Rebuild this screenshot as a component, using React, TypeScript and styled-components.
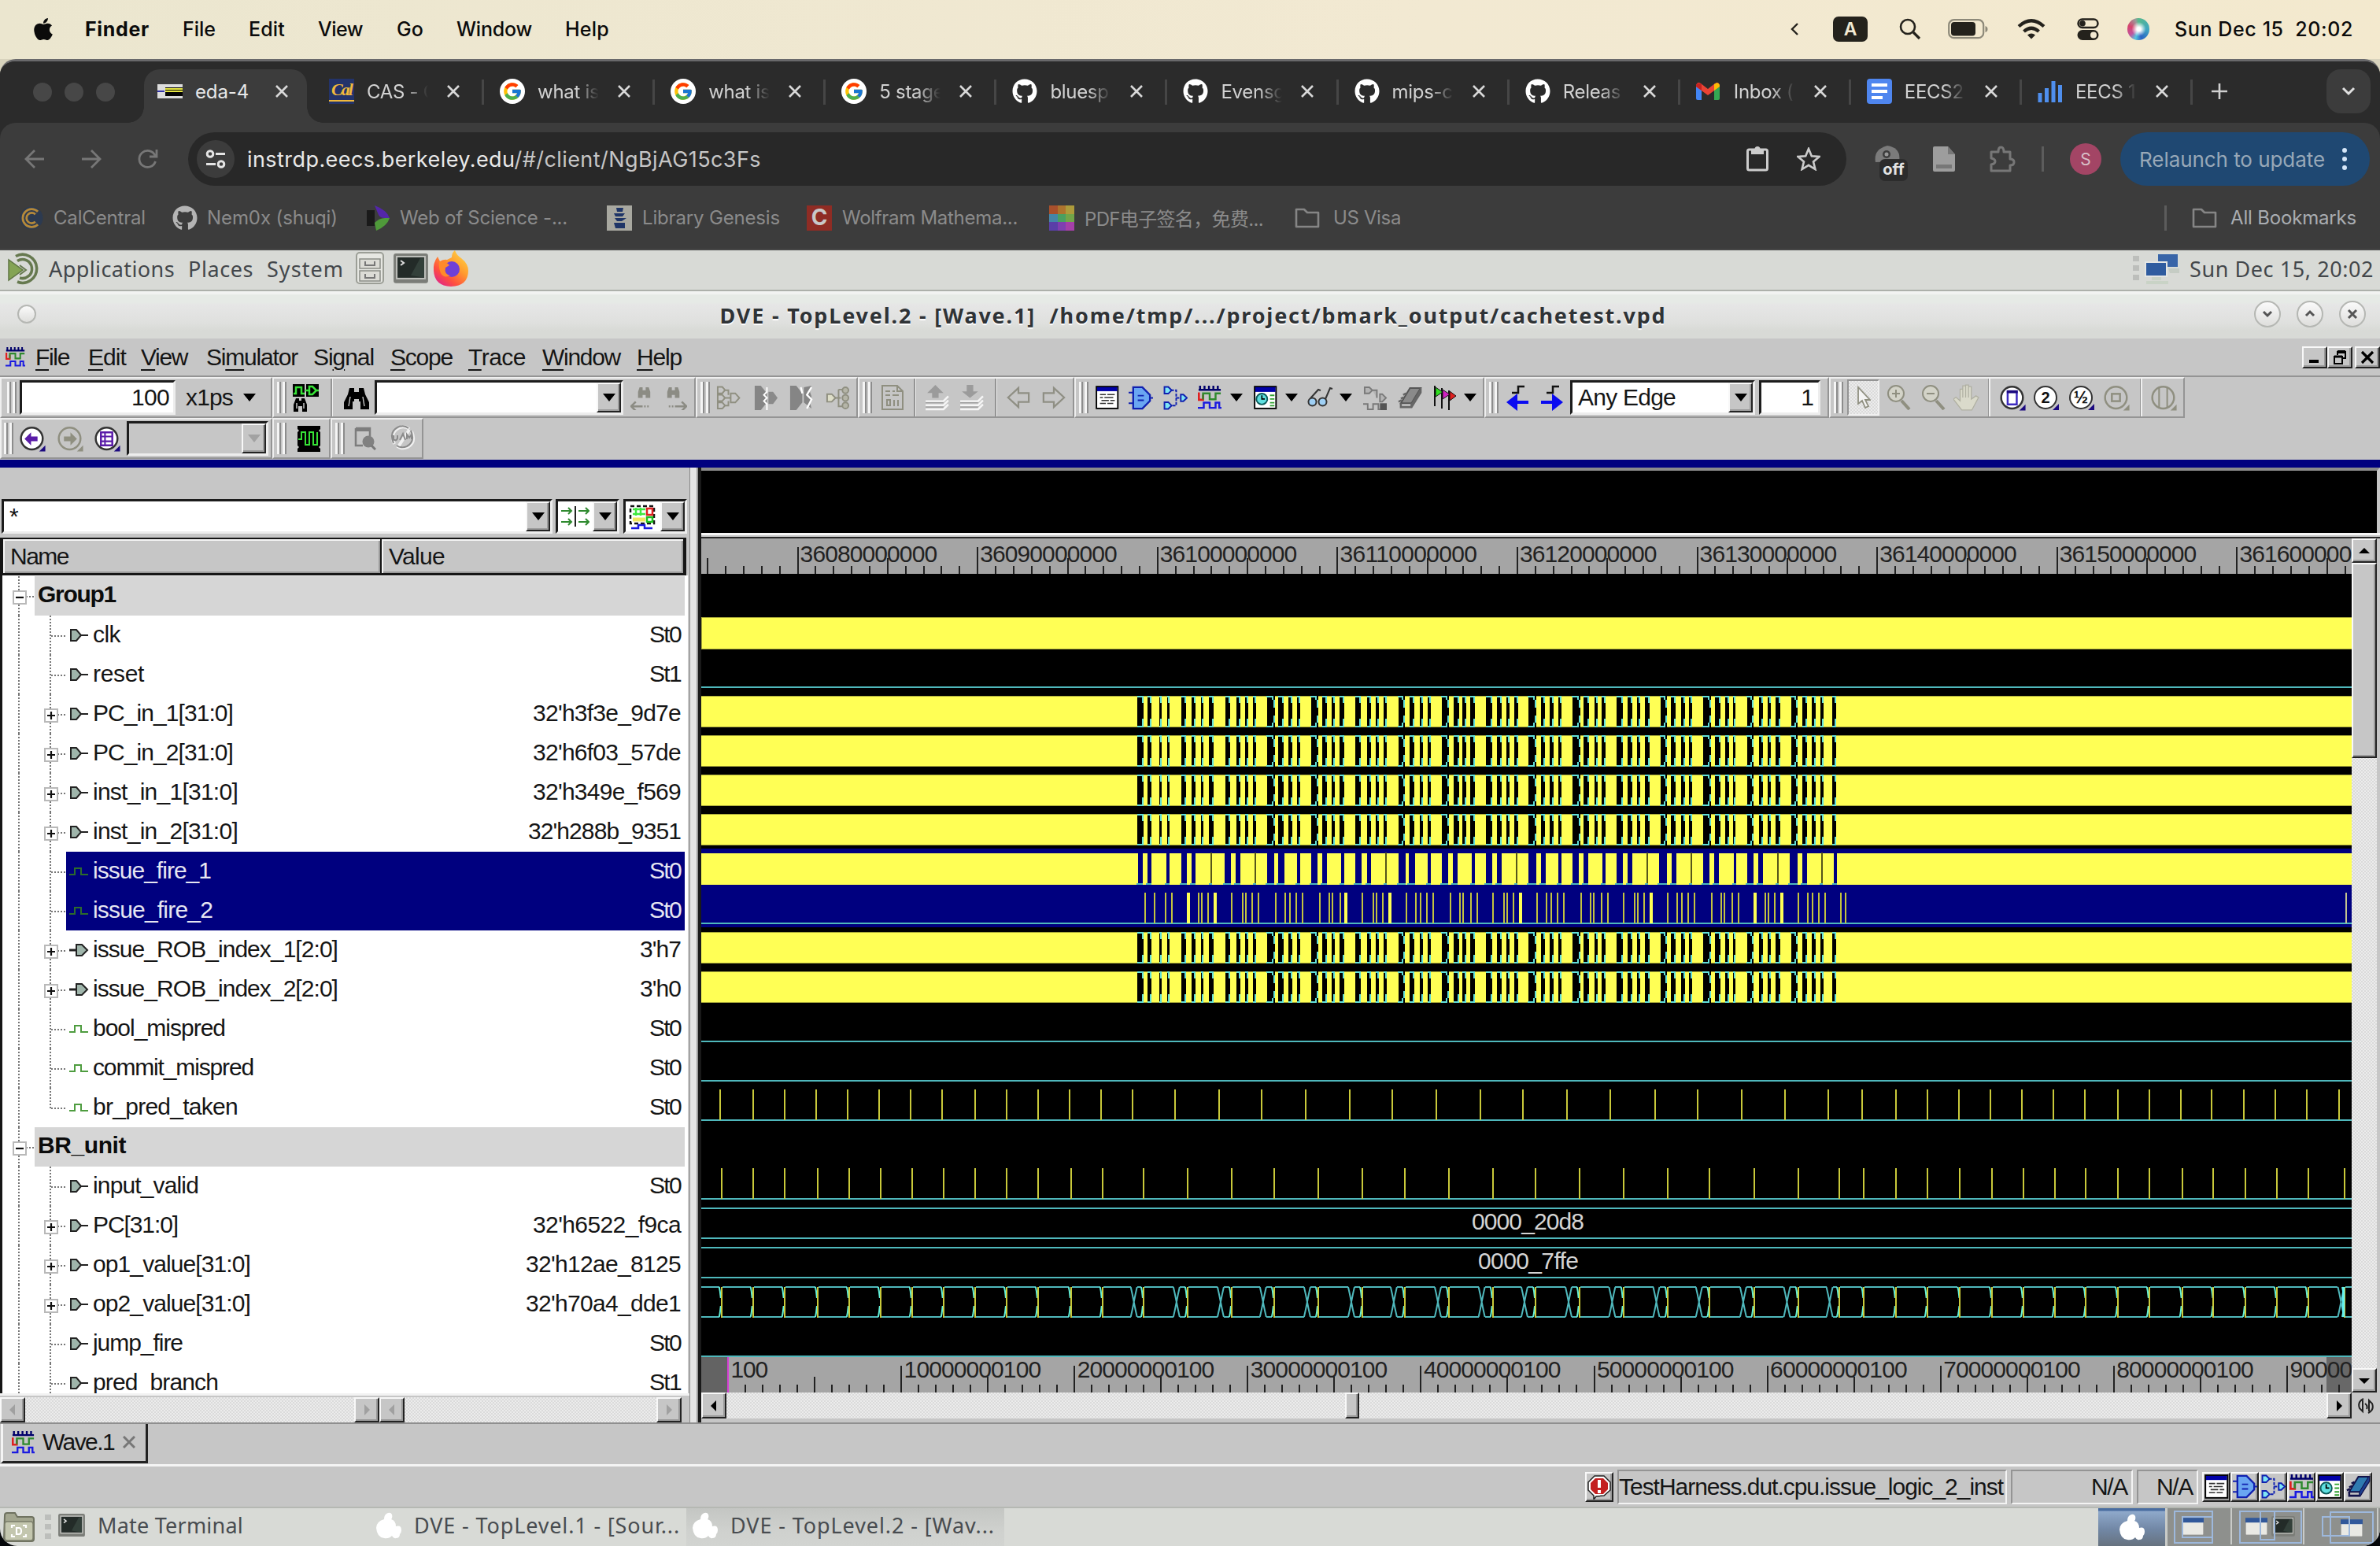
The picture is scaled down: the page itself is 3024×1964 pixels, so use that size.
import React, { useLayoutEffect, useRef } from "react";
import styled, { createGlobalStyle, css } from "styled-components";
import { FaApple, FaGithub } from "react-icons/fa";
import { FcGoogle } from "react-icons/fc";

const QT = `"Liberation Sans", Arial, sans-serif`;
const UI = `Inter, "Noto Sans CJK SC", sans-serif`;
const MATE = `"Noto Sans", sans-serif`;

const Global = createGlobalStyle`
  * { box-sizing: border-box; }
  html, body { margin: 0; padding: 0; background: #000; overflow: hidden; }
  svg { display: block; flex: none; }
`;

const raised = css`
  background: #c6c6c6;
  border: 2px solid;
  border-color: #f8f8f8 #222 #222 #f8f8f8;
  box-shadow: inset -2px -2px 0 #9a9a9a;
`;
const sunken = css`
  border: 3px solid;
  border-color: #1c1c1c #ededed #ededed #1c1c1c;
`;
const dither = css`
  background-color: #e6e6e6;
  background-image: conic-gradient(#dadada 25%, #ececec 0 50%, #dadada 0 75%, #ececec 0);
  background-size: 4px 4px;
`;

/* ---------- text that spreads its letters over a given width ---------- */
const FitSpan = styled.span`
  display: inline-block;
  white-space: pre;
  flex: none;
`;
function Fit({ w, children }: { w: number; children: React.ReactNode }) {
  const ref = useRef<HTMLSpanElement>(null);
  useLayoutEffect(() => {
    const el = ref.current;
    if (!el) return;
    el.style.letterSpacing = "0px";
    const natural = el.getBoundingClientRect().width;
    const n = (el.textContent || "x").length;
    el.style.letterSpacing = `${(w - natural) / n}px`;
  }, [w, children]);
  return <FitSpan ref={ref}>{children}</FitSpan>;
}

const Slot = styled.div<{ $w: number; $pl?: number }>`
  flex: none;
  display: flex;
  align-items: center;
  width: ${(p) => p.$w}px;
  padding-left: ${(p) => p.$pl || 0}px;
  height: 100%;
`;
const Spacer = styled.div`
  flex: 1;
`;

/* ================= desktop menu bar ================= */
const Screen = styled.div`
  width: 3024px;
  height: 1964px;
  display: flex;
  flex-direction: column;
  overflow: hidden;
  background: #eee7cf;
`;
const MenuBar = styled.div`
  height: 75px;
  flex: none;
  display: flex;
  align-items: center;
  padding: 0 0 2px 39px;
  background: linear-gradient(90deg, #ebe6cf, #f2e9d2 60%, #f3e9ce);
  font: 500 25px ${UI};
  color: #0b0b0b;
`;
const Bold = styled.span`
  font-weight: 700;
`;
const InputBadge = styled.div`
  width: 44px;
  height: 32px;
  border-radius: 7px;
  background: #24221c;
  color: #f2e9d2;
  display: flex;
  align-items: center;
  justify-content: center;
  font: 600 23px ${UI};
`;
const Siri = styled.div`
  width: 28px;
  height: 28px;
  border-radius: 50%;
  background: radial-gradient(circle at 52% 50%, #fff 0 12%, transparent 45%),
    conic-gradient(#57b98c, #3fa7c0 25%, #2b63c4 45%, #53c5df 55%, #c0559e 65%, #d8436c 80%, #9a9a9a 95%, #57b98c);
`;

function MacMenu() {
  return (
    <MenuBar>
      <Slot $w={69}>
        <FaApple size={32} />
      </Slot>
      <Slot $w={124}><Bold><Fit w={82}>Finder</Fit></Bold></Slot>
      <Slot $w={84}><Fit w={42}>File</Fit></Slot>
      <Slot $w={88}><Fit w={46}>Edit</Fit></Slot>
      <Slot $w={100}><Fit w={57}>View</Fit></Slot>
      <Slot $w={76}><Fit w={34}>Go</Fit></Slot>
      <Slot $w={138}><Fit w={96}>Window</Fit></Slot>
      <Slot $w={80}><Fit w={56}>Help</Fit></Slot>
      <Spacer />
      <Slot $w={55}>
        <svg width="12" height="18" viewBox="0 0 12 18"><path d="M10 2 3 9l7 7" fill="none" stroke="#24221c" strokeWidth="2.4" /></svg>
      </Slot>
      <Slot $w={84}><InputBadge>A</InputBadge></Slot>
      <Slot $w={62}>
        <svg width="28" height="28" viewBox="0 0 28 28" fill="none" stroke="#24221c" strokeWidth="2.6"><circle cx="11" cy="11" r="9" /><path d="m18 18 8 8" strokeWidth="3.2" /></svg>
      </Slot>
      <Slot $w={88}>
        <svg width="52" height="26" viewBox="0 0 52 26"><rect x="1.2" y="1.2" width="44" height="23" rx="6.5" fill="none" stroke="#8d8979" strokeWidth="2.2" /><rect x="4" y="4" width="31" height="17.5" rx="4" fill="#24221c" /><path d="M47.5 9v8q3-1 3-4t-3-4z" fill="#8d8979" /></svg>
      </Slot>
      <Slot $w={76}>
        <svg width="36" height="26" viewBox="0 0 36 26" fill="none" stroke="#24221c" strokeWidth="4.2"><path d="M2 9.5Q18-5 34 9.5" /><path d="M8.500 16Q18 7.500 27.500 16" /><path d="m13 20.500q5-4 10 0l-5 5z" fill="#24221c" stroke="none" /></svg>
      </Slot>
      <Slot $w={64}>
        <svg width="28" height="28" viewBox="0 0 28 28"><rect x="1.500" y="1.500" width="25" height="10.500" rx="5.200" fill="none" stroke="#24221c" strokeWidth="2.500" /><circle cx="7" cy="6.700" r="3.800" fill="#24221c" /><rect x="0.500" y="15" width="27" height="13" rx="6.500" fill="#24221c" /><circle cx="21" cy="21.500" r="4" fill="#f2e9d2" /></svg>
      </Slot>
      <Slot $w={60}><Siri /></Slot>
      <Slot $w={261}><Fit w={227}>Sun Dec 15  20:02</Fit></Slot>
    </MenuBar>
  );
}

/* ================= browser chrome ================= */
const Browser = styled.div`
  flex: 1;
  min-width: 0;
  display: flex;
  flex-direction: column;
  background: #2b2b2b;
  border-radius: 20px 20px 22px 22px;
  overflow: hidden;
  border-top: 3px solid #69696b;
`;
const Desk = styled.div`
  flex: 1;
  display: flex;
  background: linear-gradient(#d8d3bd 0 100px, #05070a 100px);
`;
const TabStrip = styled.div`
  height: 78px;
  flex: none;
  display: flex;
  align-items: flex-end;
  padding-left: 42px;
  background: #2b2b2b;
  font: 400 24px ${UI};
  color: #d2d2d2;
`;
const Lights = styled.div`
  display: flex;
  gap: 16px;
  width: 141px;
  height: 78px;
  align-items: center;
  flex: none;
`;
const Light = styled.div`
  width: 24px;
  height: 24px;
  border-radius: 50%;
  background: #474747;
`;
const ActiveTab = styled.div`
  width: 207px;
  height: 68px;
  flex: none;
  display: flex;
  align-items: center;
  padding: 0 0 12px 17px;
  border-radius: 20px 20px 0 0;
  background: #3c3c3c;
  color: #e8e8e8;
  position: relative;
  &::before, &::after {
    content: "";
    position: absolute;
    bottom: 0;
    width: 20px;
    height: 20px;
  }
  &::before { left: -20px; background: radial-gradient(circle at 0 0, transparent 19.5px, #3c3c3c 20px); }
  &::after { right: -20px; background: radial-gradient(circle at 100% 0, transparent 19.5px, #3c3c3c 20px); }
`;
const TabBox = styled.div<{ $sep: boolean; $w?: number }>`
  width: ${(p) => p.$w || 217.1}px;
  height: 68px;
  padding: 0 0 12px 22px;
  flex: none;
  display: flex;
  align-items: center;
  position: relative;
  &::before {
    content: "";
    display: ${(p) => (p.$sep ? "block" : "none")};
    position: absolute;
    left: -1px;
    top: 13px;
    width: 3px;
    height: 32px;
    background: #464646;
  }
`;
const Fav = styled.div`
  width: 48px;
  flex: none;
`;
const TabTitle = styled.div`
  width: 78px;
  overflow: hidden;
  white-space: pre;
  letter-spacing: -0.3px;
  flex: none;
  mask-image: linear-gradient(90deg, #000 62%, transparent 100%);
`;
const RoundBtn = styled.div`
  width: 56px;
  height: 56px;
  border-radius: 18px;
  background: #3c3c3c;
  display: flex;
  align-items: center;
  justify-content: center;
`;
const TabMenu = styled.div`
  width: 68px;
  height: 68px;
  flex: none;
`;
const Cross = () => (
  <svg width="16" height="16" viewBox="0 0 16 16"><path d="m1 1 14 14M15 1 1 15" stroke="#d8d8d8" strokeWidth="2.600" /></svg>
);
const White = styled.div`
  width: 32px;
  height: 32px;
  border-radius: 50%;
  background: #fff;
  display: flex;
  align-items: center;
  justify-content: center;
`;
const GIcon = () => <White><FcGoogle size={26} /></White>;
const Hub = () => <FaGithub size={32} color="#fff" />;
const CalText = styled.div`
  width: 32px;
  height: 32px;
  background: #23336a;
  color: #f0b93c;
  font: italic 700 22px/27px "Liberation Serif", serif;
  letter-spacing: -2px;
  text-align: center;
  box-shadow: inset 0 -3px 0 #23336a, inset 0 -5px 0 #f0b93c;
`;
const Gmail = () => (
  <svg width="30" height="22" viewBox="0 0 30 22"><path d="M0 3v17q0 2 2 2h5V9z" fill="#4285f4" /><path d="M30 3v17q0 2-2 2h-5V9z" fill="#34a853" /><path d="M0 3q2-5 6-2l9 7 9-7q4-3 6 2v2l-15 11L0 5z" fill="#ea4335" /><path d="M23 2q5-4 7 1v2l-7 5z" fill="#fbbc04" /><path d="M0 3q2-4 7-1v8L0 5z" fill="#c5221f" /></svg>
);
const Docs = () => (
  <svg width="32" height="32" viewBox="0 0 32 32"><rect width="32" height="32" rx="4" fill="#4f86ef" /><path d="M6 8h20M6 16h20M6 24h14" stroke="#fff" strokeWidth="4" /></svg>
);
const Bars = () => (
  <svg width="32" height="32" viewBox="0 0 32 32"><path d="M3 30V18M11.500 30V12M20 30V3M28.500 30V8" stroke="#4f8fee" strokeWidth="5" /></svg>
);
const EdaFav = () => (
  <svg width="32" height="18" viewBox="0 0 32 18"><rect width="32" height="18" fill="#ddd" /><rect x="10" y="4" width="22" height="11" fill="#050505" /><path d="M10 6h22M10 9h22" stroke="#e8e840" strokeWidth="2" /><path d="M0 9h9" stroke="#33a" strokeWidth="2" /></svg>
);

const TABS: [React.ReactNode, string][] = [
  [<CalText>Cal</CalText>, "CAS - C"],
  [<GIcon />, "what is"],
  [<GIcon />, "what is"],
  [<GIcon />, "5 stage"],
  [<Hub />, "bluesp"],
  [<Hub />, "Evensg"],
  [<Hub />, "mips-c"],
  [<Hub />, "Releas"],
  [<Gmail />, "Inbox ("],
  [<Docs />, "EECS2"],
  [<Bars />, "EECS 1"],
];

const ToolRow = styled.div`
  height: 80px;
  flex: none;
  display: flex;
  align-items: center;
  padding: 12px 0 0 1px;
  background: #3c3c3c;
  border-radius: 20px 20px 0 0;
  font: 400 27px ${UI};
`;
const Omni = styled.div`
  width: 2107px;
  height: 68px;
  border-radius: 34px;
  background: #282828;
  flex: none;
  display: flex;
  align-items: center;
  padding-left: 11px;
  color: #c6c6c6;
`;
const SiteBtn = styled.div`
  width: 48px;
  height: 48px;
  border-radius: 50%;
  background: #3c3c3c;
  display: flex;
  align-items: center;
  justify-content: center;
  margin-right: 16px;
  flex: none;
`;
const Host = styled.span`
  color: #e9e9e9;
`;
const VBar = styled.div<{ $c?: string }>`
  width: 3px;
  height: 32px;
  background: ${(p) => p.$c || "#5c5c5c"};
`;
const Avatar = styled.div`
  width: 40px;
  height: 40px;
  border-radius: 50%;
  background: #a34565;
  color: #d9c0c8;
  font-size: 21px;
  display: flex;
  align-items: center;
  justify-content: center;
`;
const Relaunch = styled.div`
  width: 317px;
  height: 68px;
  border-radius: 34px;
  background: #1f4872;
  color: #98a8b8;
  display: flex;
  align-items: center;
  padding-left: 24px;
  font-size: 26px;
`;
const OffWrap = styled.div`
  position: relative;
  width: 46px;
  height: 40px;
`;
const OffBadge = styled.div`
  position: absolute;
  left: 7px;
  top: 20px;
  width: 36px;
  height: 28px;
  border-radius: 7px;
  background: #2c2c2c;
  color: #e4e4e4;
  font: 700 20px/27px ${UI};
  text-align: center;
`;
const Marks = styled.div`
  height: 82px;
  flex: none;
  display: flex;
  align-items: center;
  background: #3c3c3c;
  padding: 1px 0 0 25px;
  font: 400 24px ${UI};
  color: #8b8b8b;
  border-bottom: 2px solid #464646;
`;
const AllMarks = styled.span`
  color: #a9adb2;
`;
const Folder = () => (
  <svg width="32" height="26" viewBox="0 0 32 26"><path d="M2 2h10l4 4h14v18H2z" fill="none" stroke="#858585" strokeWidth="2.600" strokeLinejoin="round" /></svg>
);
const Square = styled.div<{ $bg: string; $c: string }>`
  width: 32px;
  height: 32px;
  background: ${(p) => p.$bg};
  color: ${(p) => p.$c};
  font: 700 28px/31px ${UI};
  text-align: center;
`;
const CalC = () => (
  <svg width="30" height="32" viewBox="0 0 30 32" fill="none"><circle cx="15" cy="16" r="14.500" fill="#2c3a50" /><path d="M21.500 9.500a9 9 0 1 0 0 13" stroke="#b5893a" strokeWidth="7.500" /><path d="M21.500 9.500a9 9 0 1 0 0 13" stroke="#2c3a50" strokeWidth="2" /></svg>
);
const PDF_COLORS = ["#a8502c", "#ad742e", "#ad9b3b", "#4585a8", "#4a9f60", "#72a548", "#5a3fa8", "#7f3fb0", "#a53fa8"];

function Chrome() {
  return (
    <>
      <TabStrip>
        <Lights><Light /><Light /><Light /></Lights>
        <ActiveTab>
          <Fav><EdaFav /></Fav>
          <Slot $w={102}><Fit w={68}>eda-4</Fit></Slot>
          <Cross />
        </ActiveTab>
        <Slot $w={6} />
        {TABS.map(([icon, t], i) => (
          <TabBox key={i} $sep={i > 0}>
            <Fav>{icon}</Fav>
            <TabTitle>{t}</TabTitle>
            <Slot $w={24} />
            <Cross />
          </TabBox>
        ))}
        <TabBox $sep $w={100}>
          <Slot $w={30} $pl={3}>
            <svg width="22" height="22" viewBox="0 0 22 22"><path d="M11 1v20M1 11h20" stroke="#d0d0d0" strokeWidth="2.600" /></svg>
          </Slot>
        </TabBox>
        <Spacer />
        <TabMenu>
          <RoundBtn>
            <svg width="18" height="12" viewBox="0 0 18 12"><path d="m2 2 7 7 7-7" fill="none" stroke="#e0e0e0" strokeWidth="3" /></svg>
          </RoundBtn>
        </TabMenu>
      </TabStrip>
      <ToolRow>
        <Slot $w={71} $pl={30}><svg width="26" height="24" viewBox="0 0 26 24"><path d="M13 1 2 12l11 11M2 12h23" fill="none" stroke="#777" strokeWidth="2.800" /></svg></Slot>
        <Slot $w={73} $pl={31}><svg width="26" height="24" viewBox="0 0 26 24"><path d="m13 1 11 11-11 11M24 12H1" fill="none" stroke="#777" strokeWidth="2.800" /></svg></Slot>
        <Slot $w={94} $pl={30}><svg width="26" height="26" viewBox="0 0 26 26"><path d="M22.500 16A10.500 10.500 0 1 1 22 8.500M24 1v9h-9" fill="none" stroke="#777" strokeWidth="2.800" /></svg></Slot>
        <Omni>
          <SiteBtn>
            <svg width="26" height="24" viewBox="0 0 26 24" fill="none" stroke="#e4e4e4" strokeWidth="3"><circle cx="6" cy="5.500" r="3.800" /><path d="M13 5.500h12M1 18.500h12" /><circle cx="20" cy="18.500" r="3.800" /></svg>
          </SiteBtn>
          <Fit w={653}><Host>instrdp.eecs.berkeley.edu</Host>/#/client/NgBjAG15c3Fs</Fit>
          <Spacer />
          <Slot $w={64}><svg width="28" height="32" viewBox="0 0 28 32"><rect x="1.500" y="4" width="25" height="26" rx="2" fill="none" stroke="#ccc" strokeWidth="3" /><rect x="6" y="3" width="16" height="7" fill="#ccc" /><circle cx="14" cy="3.500" r="3.500" fill="#ccc" /></svg></Slot>
          <Slot $w={63}><svg width="30" height="30" viewBox="0 0 30 30"><path d="m15 2 3.800 9.200 9.700.8-7.500 6.400 2.400 9.600L15 22.800 6.600 28 9 18.400 1.500 12l9.700-.8z" fill="none" stroke="#ccc" strokeWidth="2.600" /></svg></Slot>
        </Omni>
        <Slot $w={110} $pl={35}>
          <OffWrap>
            <svg width="36" height="38" viewBox="0 0 36 38"><path d="M2 24Q-1 8 17 3q18 3 15 20z" fill="#7b7b7b" /><circle cx="16" cy="14" r="5" fill="#3c3c3c" /><circle cx="16" cy="14" r="2.500" fill="#999" /></svg>
            <OffBadge>off</OffBadge>
          </OffWrap>
        </Slot>
        <Slot $w={71}><svg width="28" height="32" viewBox="0 0 28 32"><path d="M0 2q0-2 2-2h17l9 10v20q0 2-2 2H2q-2 0-2-2z" fill="#9d9d9d" /><path d="M19 0v10h9z" fill="#777" /><path d="M4 23h20v5H4z" fill="#777" /></svg></Slot>
        <Slot $w={67}><svg width="34" height="34" viewBox="0 0 34 34"><path d="M3 8h9q0-6 3.500-6T19 8h8v9q5 0 5 4t-5 4v7H3v-8q5-1 5-4t-5-4z" fill="none" stroke="#777" strokeWidth="3" strokeLinejoin="round" /></svg></Slot>
        <Slot $w={36}><VBar /></Slot>
        <Slot $w={64}><Avatar>S</Avatar></Slot>
        <Relaunch>
          <Slot $w={258}><Fit w={236}>Relaunch to update</Fit></Slot>
          <svg width="6" height="30" viewBox="0 0 6 30" fill="#d5e6f8"><circle cx="3" cy="4" r="3" /><circle cx="3" cy="15" r="3" /><circle cx="3" cy="26" r="3" /></svg>
        </Relaunch>
      </ToolRow>
      <Marks>
        <Slot $w={43}><CalC /></Slot>
        <Slot $w={151}><Fit w={117}>CalCentral</Fit></Slot>
        <Slot $w={44}><FaGithub size={32} color="#b4b4b4" /></Slot>
        <Slot $w={203}><Fit w={166}>Nem0x (shuqi)</Fit></Slot>
        <Slot $w={42}><svg width="30" height="32" viewBox="0 0 30 32"><path d="M0 6h10v20L0 26z" fill="#1a1a1a" /><path d="M10 0q16 6 19 16l-6 0q-6 0-8-4z" fill="#5326a8" /><path d="M29 16Q26 26 12 32l-2-10q6-6 13-6z" fill="#4f9a3a" /></svg></Slot>
        <Slot $w={263}><Fit w={213}>Web of Science -...</Fit></Slot>
        <Slot $w={45}><svg width="32" height="32" viewBox="0 0 32 32"><rect width="32" height="32" fill="#a8a8a0" /><path d="M12 3h9l-1 5h-7zM9 10h14l-3 4h-9zM10 16h15l-6 4h-6zM9 22h14v7H11z" fill="#1f3567" /></svg></Slot>
        <Slot $w={209}><Fit w={175}>Library Genesis</Fit></Slot>
        <Slot $w={45}><Square $bg="#8f2c24" $c="#c8c8c8">C</Square></Slot>
        <Slot $w={263}><Fit w={223}>Wolfram Mathema...</Fit></Slot>
        <Slot $w={45}>
          <svg width="32" height="32" viewBox="0 0 3 3" shapeRendering="crispEdges">
            {PDF_COLORS.map((c, i) => <rect key={i} x={i % 3} y={Math.floor(i / 3)} width="1" height="1" fill={c} />)}
          </svg>
        </Slot>
        <Slot $w={267}><Fit w={227}>PDF电子签名，免费...</Fit></Slot>
        <Slot $w={49}><Folder /></Slot>
        <Slot $w={120}><Fit w={86}>US Visa</Fit></Slot>
        <Spacer />
        <Slot $w={35}><VBar /></Slot>
        <Slot $w={49}><Folder /></Slot>
        <Slot $w={190}><AllMarks><Fit w={160}>All Bookmarks</Fit></AllMarks></Slot>
      </Marks>
    </>
  );
}

/* ================= MATE desktop panels ================= */
const TopPanel = styled.div`
  height: 52px;
  flex: none;
  display: flex;
  align-items: center;
  padding: 0 0 4px 9px;
  background: #d8dad6;
  border-bottom: 2px solid #adb0ab;
  font: 400 27px ${MATE};
  color: #43474b;
`;
const TitleBar = styled.div`
  height: 60px;
  flex: none;
  display: flex;
  align-items: center;
  padding: 0 18px 2px 22px;
  background: linear-gradient(#f2f3f2 0 3px, #e6eae6 5px 14px, #e6e6e6 17px, #dfe0de 40px, #d8dad6 50px);
  font: 700 27px ${MATE};
  color: #2f3336;
`;
const TitleText = styled.div`
  flex: 1;
  display: flex;
  justify-content: center;
  text-shadow: 0 2px 1px #fff;
  padding: 2px 0 0 122px;
`;
const Knob = styled.div<{ $d: number }>`
  width: ${(p) => p.$d}px;
  height: ${(p) => p.$d}px;
  border-radius: 50%;
  border: 2px solid #b5b7b3;
  background: linear-gradient(#fafafa, #dededc);
  display: flex;
  align-items: center;
  justify-content: center;
  flex: none;
`;
const Knobs = styled.div`
  display: flex;
  gap: 20px;
`;
const Dots = styled.div`
  width: 8px;
  height: 32px;
  flex: none;
  background: repeating-linear-gradient(#bcbebb 0 7px, transparent 7px 12px);
`;

const MateLogo = () => (
  <svg width="42" height="42" viewBox="0 0 42 42" fill="none"><path d="M11 5.500A18 18 0 1 1 13 38" stroke="#66794f" strokeWidth="3.500" /><path d="M13 11.500A12 12 0 1 1 16 33" stroke="#66794f" strokeWidth="3.500" /><path d="M2 10v26l18-13z" fill="#84a455" stroke="#5f7544" strokeWidth="1.500" /><path d="M16 17l8 6-8 6" stroke="#66794f" strokeWidth="2" /></svg>
);
const Drawer = () => (
  <svg width="36" height="42" viewBox="0 0 36 42"><rect x="1" y="1" width="34" height="39" rx="4" fill="#e6e7e2" stroke="#9b9e96" strokeWidth="2" /><rect x="5" y="9" width="26" height="12" fill="#dcdcd6" stroke="#8a8d86" strokeWidth="1.500" /><rect x="5" y="24" width="26" height="13" fill="#dcdcd6" stroke="#8a8d86" strokeWidth="1.500" /><path d="M12 12v5h12v-5M12 28v5h12v-5" fill="none" stroke="#777" strokeWidth="2" /></svg>
);
const Term = ({ s }: { s: number }) => (
  <svg width={s} height={s * 0.86} viewBox="0 0 44 38"><rect width="44" height="38" rx="3" fill="#7b7d78" /><rect x="3" y="3" width="38" height="30" fill="#bfc0bc" /><rect x="5" y="5" width="34" height="26" fill="#232b28" /><path d="m9 9 4 3-4 3" stroke="#ddd" fill="none" strokeWidth="2" /><path d="M22 28 34 6h5v25z" fill="#33403a" /></svg>
);
const Fox = () => (
  <svg width="46" height="46" viewBox="0 0 46 46"><defs><linearGradient id="fx" x1="1" y1="0" x2=".2" y2="1"><stop offset="0" stopColor="#ffe34a" /><stop offset=".45" stopColor="#ff9a2e" /><stop offset=".75" stopColor="#ff4f3f" /><stop offset="1" stopColor="#e0258a" /></linearGradient></defs><path d="M28 0q2 6 8 10 9 7 9 16 0 19-22 20Q2 45 1 26 0 16 6 8l3 6q5-3 9-2l6-3q0-6 4-9z" fill="url(#fx)" /><circle cx="24" cy="24" r="10" fill="#6f3fd8" /><path d="M8 14q9 0 13 5l-5 3q-2 8 6 10-8 4-12-3-3-7-2-15z" fill="#ff8a2a" /></svg>
);
const NetIcon = () => (
  <svg width="46" height="42" viewBox="0 0 46 42"><rect x="16" y="2" width="27" height="18" fill="#3865a8" stroke="#d8dcd8" strokeWidth="2" /><path d="M30 21h14v6H32z" fill="#c5ccc4" /><rect x="1" y="13" width="27" height="18" fill="#2f5c9f" stroke="#e4e6e4" strokeWidth="2" /><path d="M9 32h12v4H9zM2 37h28v4H2z" fill="#c9d3c6" /></svg>
);

/* ================= DVE window ================= */
const Dve = styled.div`
  flex: 1;
  min-height: 0;
  display: flex;
  flex-direction: column;
  background: #c6c6c6;
  font: 400 30px ${QT};
  color: #151515;
`;
const QtMenu = styled.div`
  height: 49px;
  flex: none;
  display: flex;
  align-items: center;
  padding-left: 7px;
  border-bottom: 2px solid #949494;
  u { text-underline-offset: 5px; text-decoration-thickness: 2px; }
`;
const MdiBtn = styled.div<{ $ml?: number }>`
  ${raised}
  width: 32px;
  height: 28px;
  margin-left: ${(p) => p.$ml || 0}px;
  display: flex;
  align-items: center;
  justify-content: center;
  flex: none;
`;
const Bar = styled.div`
  height: 52px;
  flex: none;
  display: flex;
  align-items: stretch;
`;
const BarEnd = styled.div`
  height: 1px;
  flex: none;
`;
const Dock = styled.div<{ $w: number; $pl?: number }>`
  width: ${(p) => p.$w}px;
  padding-left: ${(p) => p.$pl || 0}px;
  flex: none;
  display: flex;
  align-items: center;
  border: solid;
  border-width: 2px 2px 2px 2px;
  border-color: #efefef #949494 #949494 #efefef;
`;
const Grip = styled.div<{ $mr: number }>`
  width: 12px;
  height: 40px;
  flex: none;
  margin-right: ${(p) => p.$mr}px;
  background: linear-gradient(90deg, #f5f5f5 0 3px, #8c8c8c 3px 5px, #c6c6c6 5px 7px, #f5f5f5 7px 10px, #8c8c8c 10px);
`;
const Field = styled.div<{ $w: number; $bg?: string; $ml?: number }>`
  ${sunken}
  width: ${(p) => p.$w}px;
  margin-left: ${(p) => p.$ml || 0}px;
  height: 44px;
  background: ${(p) => p.$bg || "#fff"};
  display: flex;
  align-items: center;
  justify-content: flex-end;
  padding-right: 5px;
  flex: none;
`;
const Combo = styled.div<{ $w: number; $bg?: string; $ml?: number; $pl?: number }>`
  ${sunken}
  width: ${(p) => p.$w}px;
  margin-left: ${(p) => p.$ml || 0}px;
  height: 44px;
  background: ${(p) => p.$bg || "#fff"};
  display: flex;
  align-items: center;
  justify-content: space-between;
  padding-left: ${(p) => p.$pl ?? 7}px;
  flex: none;
`;
const DropBtn = styled.div`
  ${raised}
  width: 31px;
  height: 100%;
  display: flex;
  align-items: center;
  justify-content: center;
  flex: none;
`;
const Tri = ({ c = "#000" }: { c?: string }) => (
  <svg width="16" height="10" viewBox="0 0 16 10"><path d="M0 0h16L8 10z" fill={c} /></svg>
);
const Vline = styled.div<{ $mr: number }>`
  width: 3px;
  height: 100%;
  flex: none;
  margin-right: ${(p) => p.$mr}px;
  background: linear-gradient(90deg, #949494 0 1.500px, #f0f0f0 0);
`;
const Pressed = styled.div`
  ${dither}
  width: 41px;
  height: 46px;
  border: 2px solid;
  border-color: #949494 #f0f0f0 #f0f0f0 #949494;
  display: flex;
  align-items: center;
  justify-content: center;
  margin-right: 8px;
  flex: none;
`;

/* small toolbar glyphs on a 16 by 16 grid */
const G = ({ children, s = 31 }: { children: React.ReactNode; s?: number }) => (
  <svg width={s} height={s} viewBox="0 0 16 16" fill="none">{children}</svg>
);
const WaveI = ({ s }: { s?: number }) => (
  <G s={s}>
    <path d="M.5 2.800h15M1.500 0v3M4.500 0v3M7.500 0v3M10.500 0v3M13.500 0v3" stroke="#00006a" strokeWidth="1.300" />
    <path d="M.7 4.500v5H3.500V6" stroke="#e02020" strokeWidth="1.400" />
    <path d="M3.500 9.300V5.200h4.500v4h4v-4h3.500" stroke="#2f8a2f" strokeWidth="1.300" />
    <path d="M0 15h4v-3.500h4V15h4v-3.500h2.500V15H16" stroke="#1a1ae0" strokeWidth="1.300" />
  </G>
);
const SrcI = ({ s }: { s?: number }) => (
  <G s={s}><rect x=".6" y=".6" width="14.500" height="14.800" fill="#fff" stroke="#000" /><rect x="1" y="1" width="13.700" height="2.700" fill="#0000a8" /><path d="M3 6h4M8 6h5M3 8h2M6 8h6M4 10h5M10 10h3M3 12h4M8 12h4" stroke="#333" strokeWidth=".9" /></G>
);
const GateI = ({ s }: { s?: number }) => (
  <G s={s}><path d="M3 1h6l5 5v4l-5 5H3z" fill="#6aa6f2" stroke="#1020b0" strokeWidth="1.200" /><path d="M0 4.500h3M0 11.500h3M14 8h2M6 6.500h4M6 9.500h4" stroke="#1020b0" strokeWidth="1" /></G>
);
const PathI = ({ s }: { s?: number }) => (
  <G s={s}><path d="M5 3h3.500v10H5M8.500 8H12" stroke="#1020b0" strokeWidth="1" strokeDasharray="2 .8" /><path d="M.8.800h2.500L5.500 3 3.300 5.200H.8zM.8 10.800h2.500L5.500 13l-2.200 2.200H.8zM11.500 5.800h1.700L15.500 8l-2.300 2.200h-1.700z" fill="#7fe6f5" stroke="#1020b0" /></G>
);
const ListI = ({ s }: { s?: number }) => (
  <G s={s}><rect x=".6" y=".6" width="14.500" height="14.800" fill="#fff" stroke="#000" /><rect x="1" y="1" width="13.700" height="3.200" fill="#0000a8" /><circle cx="5.500" cy="9" r="3.700" fill="#5fe0e0" stroke="#0b5a5a" /><path d="M5.500 6.500V9h2" stroke="#000" strokeWidth=".9" /><path d="M11 6.500h3M11 9h3M11 11.500h3M11 13.500h3" stroke="#2fa02f" strokeWidth="1" /></G>
);
const MemI = ({ s, gray }: { s?: number; gray?: boolean }) => (
  <G s={s}><path d="M8 1.500h7L9 11.500H2z" fill={gray ? "#8a8a8a" : "#2f7ab0"} stroke={gray ? "#555" : "#12124a"} strokeWidth="1" /><path d="M2 11.500v2.500h7l6-9.500v-3M9 11.500V14M.5 10.500l2-1M2 8.500l2-1M3.500 6l2-1" stroke={gray ? "#666" : "#12124a"} strokeWidth="1.300" /><path d="M9 14v-2.500l6-10V4.500z" fill={gray ? "#666" : "#1d3f90"} /></G>
);
const Bino = ({ c = "#000", s = 32 }: { c?: string; s?: number }) => (
  <G s={s}><path d="M3.500 2h3v2.500h3V2h3l1 4 2.500 5v4.500h-5.500v-5h-1V9h-3v1.500h-1v5H0V11l2.500-5z" fill={c} /><path d="M4 7.500l-1 6M12 7.500l1 6" stroke="#c6c6c6" strokeWidth=".7" /></G>
);
const SmallBino = ({ right }: { right?: boolean }) => (
  <G><path d={right ? "M4 1h2v2h2V1h2l1 3v4H8V6H6v2H3V4z" : "M6 1h2v2h2V1h2l1 3v4h-3V6H8v2H5V4z"} fill="#8c8c84" /><path d={right ? "M4 13.500h1M6 13.500h1M8 13.500h7M12.500 10.500l3 3-3 3" : "M1 13.500h7M9 13.500h1M11 13.500h1M3.500 10.500l-3 3 3 3"} stroke="#8c8c84" strokeWidth="1.300" /></G>
);
const ZoomI = ({ c = "#333", tail = "#1c0a80", bg = "#fff", children }: { c?: string; tail?: string; bg?: string; children?: React.ReactNode }) => (
  <G s={33}><circle cx="7.500" cy="7.800" r="6.700" fill={bg} stroke={c} strokeWidth="1.200" />{children}<path d="M15.800 12v3.700H12z" fill={tail} /></G>
);
const DimGate = ({ v }: { v: number }) => (
  <G>
    {v === 0 && <path d="M1 .8h3l1.800 2L4 5H1zM1 6h3l1.800 2L4 10H1zM1 11h3l1.800 2L4 15H1zM6 3h2v3M6 13h2v-3M6 8h3M9.500 5h3L15.200 8l-2.700 3h-3z" stroke="#8f8f80" />}
    {v === 1 && <><path d="M1 0h4l4 5v6l-4 5H1z" fill="#858585" /><path d="M10 4h3l3 4-3 4h-3z" fill="#8a8a8a" /><path d="M9 1v3l-2 2 2 2-2 2 2 2v4" stroke="#fff" strokeWidth="1" /></>}
    {v === 2 && <><path d="M1 0h4l4 5v6l-4 5H1zM10 1l5-1-1 4 1 3-1 4 1 4-5-4z" fill="#858585" /><path d="m15 1-3 5 3 3-3 6M8 1l1 4" stroke="#fff" strokeWidth="1.200" /></>}
    {v === 3 && <><path d="M1 5.500h3L6.500 8 4 10.500H1z" fill="#dedec8" stroke="#8f8f80" /><path d="M6.500 8H10M8.500 2.500v11H11M8.500 2.500H11" stroke="#8f8f80" /><circle cx="13" cy="3" r="2" fill="#b5b5a8" stroke="#8f8f80" /><circle cx="13" cy="8" r="2" fill="#b5b5a8" stroke="#8f8f80" /><circle cx="13" cy="13" r="2" fill="#b5b5a8" stroke="#8f8f80" /></>}
  </G>
);
const Stack = ({ down }: { down?: boolean }) => (
  <svg width="33" height="33" viewBox="0 0 16 16" fill="none"><path d={down ? "M7 8 2 4h3V0h4v4h3z" : "M7 0 2 5h3v3h4V5h3z"} fill="#9b9b9b" /><path d="M1 10h11l3-3M1 12.500h11l3-3M1 15h11l3-3" stroke="#f6f6f6" strokeWidth="1.200" /><path d="M1 11h11M1 13.600h11" stroke="#999" strokeWidth=".6" /></svg>
);
const Hollow = ({ right }: { right?: boolean }) => (
  <G s={30}><path d={right ? "M1 5h7V1.500L15 8l-7 6.500V11H1z" : "M15 5H8V1.500L1 8l7 6.500V11h7z"} stroke="#8f8f84" strokeWidth="1.200" /></G>
);
const EdgeArrow = ({ right }: { right?: boolean }) => (
  <svg width="30" height="33" viewBox="0 0 30 33"><path d="M8 10h8V2h8" fill="none" stroke="#111" strokeWidth="2.500" /><path d={right ? "M29 22 15 11v9H1v4h14v9z" : "M1 22 15 11v9h14v4H15v9z"} fill="#0b0bf0" /></svg>
);
const FindI = () => (
  <svg width="33" height="35" viewBox="0 0 33 35"><path d="M0 0h15v16H0zM17 0h16v16H17z" fill="#000" /><path d="M1 12h3V4h7v8h4" fill="none" stroke="#36e236" strokeWidth="2.500" /><path d="M21 3h4l5 5-5 5h-4zM16 8h5M30 8h3" fill="none" stroke="#36e236" strokeWidth="2.500" /><path d="M4 18h4v3h3v-3h4l3 8v9h-6v-7H7v7H1v-9z" fill="#000" /><path d="M5 24v7M14 24v7" stroke="#c6c6c6" strokeWidth="1.500" /></svg>
);
const GreenWave = () => (
  <svg width="29" height="33" viewBox="0 0 29 33"><path d="M0 0h29v4l-2 2 2 2v17l-2 2 2 2v4H0v-4l2-2-2-2V8l2-2-2-2z" fill="#000" /><path d="M1 17h4V8h5v16h5V8h5v16h5V8" fill="none" stroke="#36e236" strokeWidth="2" /></svg>
);
const Flags = () => (
  <svg width="30" height="32" viewBox="0 0 30 32"><path d="M2 1v26M11 4v26M20 7v25" stroke="#111" strokeWidth="2" /><g stroke="#111" strokeWidth="1"><path d="m3 3 9 6-9 6z" fill="#30e020" /><path d="m12 6 9 6-9 6z" fill="#d020c0" /><path d="m21 8 8 6-8 6z" fill="#e02020" /></g></svg>
);
const Glasses = () => (
  <svg width="34" height="30" viewBox="0 0 34 30"><circle cx="6.500" cy="20.500" r="5" fill="#9fd0f5" stroke="#333" strokeWidth="2" /><circle cx="19.500" cy="20.500" r="5" fill="#9fd0f5" stroke="#333" strokeWidth="2" /><path d="M4 16 14 5l3 1M23 17 29 3l3 1" fill="none" stroke="#333" strokeWidth="2" /></svg>
);

const Digit = styled.span<{ $s: number }>`
  font: 700 ${(p) => p.$s}px ${QT};
`;
const RingDigit = styled.div`
  width: 30px;
  height: 30px;
  border-radius: 50%;
  border: 2.500px solid #333;
  background: #fff;
  display: flex;
  align-items: center;
  justify-content: center;
  position: relative;
  color: #111;
  flex: none;
  &::after {
    content: "";
    position: absolute;
    right: -4px;
    bottom: -3px;
    border: 4px solid;
    border-color: transparent #1c0a80 #1c0a80 transparent;
  }
`;

function Toolbars() {
  const dim = "#8f8f80";
  return (
    <>
      <Bar>
        <Dock $w={346} $pl={7}>
          <Grip $mr={4} />
          <Field $w={198}><Fit w={48}>100</Fit></Field>
          <Slot $w={86} $pl={13}><Fit w={60}>x1ps</Fit></Slot>
          <Tri />
        </Dock>
        <Dock $w={538} $pl={4}>
          <Grip $mr={8} />
          <Slot $w={48}><FindI /></Slot>
          <Vline $mr={14} />
          <Bino />
          <Combo $w={316} $ml={7}><span /><DropBtn><Tri /></DropBtn></Combo>
          <Slot $w={50} $pl={9}><SmallBino /></Slot>
          <SmallBino right />
        </Dock>
        <Dock $w={206} $pl={4}>
          <Grip $mr={8} />
          <Slot $w={47}><DimGate v={0} /></Slot>
          <Slot $w={45}><DimGate v={1} /></Slot>
          <Slot $w={47}><DimGate v={2} /></Slot>
          <DimGate v={3} />
        </Dock>
        <Dock $w={275} $pl={4}>
          <Grip $mr={12} />
          <Slot $w={41}>
            <svg width="28" height="32" viewBox="0 0 28 32" fill="none" stroke={dim} strokeWidth="2"><path d="M1 1h19l7 7v23H1zM20 1v7h7M5 8h6M14 8h3M5 13h6M14 13h8M7 19v7h4v-7zM16 19v8M21 19v8" /></svg>
          </Slot>
          <Vline $mr={10} />
          <Slot $w={44}><Stack /></Slot>
          <Slot $w={46}><Stack down /></Slot>
          <Vline $mr={12} />
          <Slot $w={45}><Hollow /></Slot>
          <Hollow right />
        </Dock>
        <Dock $w={521} $pl={4}>
          <Grip $mr={9} />
          <Slot $w={42}><SrcI s={30} /></Slot>
          <Slot $w={44}><GateI /></Slot>
          <Slot $w={44}><PathI /></Slot>
          <Slot $w={41}><WaveI s={30} /></Slot>
          <Slot $w={30}><Tri /></Slot>
          <Slot $w={40}><ListI s={30} /></Slot>
          <Slot $w={28}><Tri /></Slot>
          <Slot $w={41}><Glasses /></Slot>
          <Slot $w={30}><Tri /></Slot>
          <Slot $w={44}><G><path d="M1 1h3l2 2-2 2H1zM6 3h3v5M11 5.500h1.500L15 8l-2.500 2.500H11z" stroke="#7a7a7a" fill="#b5b5b5" /><path d="M0 12h3v3.500h3.500V12H10v3.500h1" stroke="#7a7a7a" /><path d="M11 11.500h4.500v4.500H11z" fill="#555" /></G></Slot>
          <Slot $w={45}><MemI gray /></Slot>
          <Slot $w={39}><Flags /></Slot>
          <Tri />
        </Dock>
        <Dock $w={438} $pl={4}>
          <Grip $mr={9} />
          <Slot $w={44}><EdgeArrow /></Slot>
          <EdgeArrow right />
          <Combo $w={235} $ml={8}><Fit w={124}>Any Edge</Fit><DropBtn><Tri /></DropBtn></Combo>
          <Field $w={78} $ml={5}>1</Field>
        </Dock>
        <Dock $w={452} $pl={4}>
          <Grip $mr={5} />
          <Pressed><svg width="18" height="30" viewBox="0 0 18 30"><path d="M2 2v21l5-4 4 9 4-2-4-8h6z" fill="#f4f4f4" stroke={dim} strokeWidth="1.800" /></svg></Pressed>
          <Slot $w={44}><G s={32}><circle cx="6.500" cy="5.500" r="5" stroke={dim} fill="#d3d3c8" /><path d="M4 5.500h5M6.500 3v5" stroke={dim} /><path d="m10 10 5 5.500" stroke={dim} strokeWidth="2" /></G></Slot>
          <Slot $w={42}><G s={32}><circle cx="6.500" cy="5.500" r="5" stroke={dim} fill="#d3d3c8" /><path d="M4 5.500h5" stroke={dim} /><path d="m10 10 5 5.500" stroke={dim} strokeWidth="2" /></G></Slot>
          <Slot $w={44}><G s={34}><path d="M5 15.500 0 9l1.500-1.200L4 10V3h1.600v5V1h1.700v7V.5H9V8V1.500h1.700V9L13.500 7l1.500 1-4 7.500z" fill="#dadacb" stroke="#b0b0a2" strokeWidth=".6" /></G></Slot>
          <Vline $mr={12} />
          <Slot $w={43}><ZoomI><rect x="4.800" y="4" width="5.600" height="8" fill="#fff" stroke="#3c2ac0" strokeWidth="1.200" /><path d="M4.300 4.200h6.700" stroke="#1c0a80" strokeWidth="1.800" /></ZoomI></Slot>
          <Slot $w={45}><RingDigit><Digit $s={20}>2</Digit></RingDigit></Slot>
          <Slot $w={44}><RingDigit><Digit $s={22}>½</Digit></RingDigit></Slot>
          <Slot $w={46}><ZoomI c={dim} tail={dim} bg="#c6c6c6"><rect x="5" y="5.500" width="5" height="4.500" stroke={dim} strokeWidth="1.200" /></ZoomI></Slot>
          <Vline $mr={11} />
          <ZoomI c={dim} tail={dim} bg="#c6c6c6"><path d="M5 1.500v13M10 1.500v13" stroke={dim} /></ZoomI>
        </Dock>
      </Bar>
      <Bar>
        <Dock $w={346} $pl={3}>
          <Grip $mr={8} />
          <Slot $w={48}><ZoomI><path d="M3 8l4-4v2.500h4v3H7V12z" fill="#5a1ca8" /></ZoomI></Slot>
          <Slot $w={47}><ZoomI c={dim} tail={dim} bg="#c6c6c6"><path d="M12 8 8 4v2.500H4v3h4V12z" fill={dim} /></ZoomI></Slot>
          <Slot $w={41}><ZoomI><rect x="4" y="4" width="7" height="8" fill="#fff" stroke="#5a1ca8" strokeWidth="1.200" /><path d="M4 6.500h7M4 9.500h7M6.500 4v8" stroke="#5a1ca8" strokeWidth="1" /></ZoomI></Slot>
          <Combo $w={180} $bg="#c6c6c6"><span /><DropBtn><Tri c="#a2a2a2" /></DropBtn></Combo>
        </Dock>
        <Dock $w={74} $pl={4}><Grip $mr={14} /><GreenWave /></Dock>
        <Dock $w={118} $pl={4}>
          <Grip $mr={12} />
          <Slot $w={46}>
            <svg width="28" height="30" viewBox="0 0 28 30"><path d="M2 2h18v10M2 2v22h9" fill="none" stroke="#7d7d7d" strokeWidth="2.500" /><path d="M2 4h18" stroke="#7d7d7d" strokeWidth="4" /><circle cx="18" cy="19" r="7.500" fill="#808080" /><path d="m22 24 5 5" stroke="#777" strokeWidth="3" /></svg>
          </Slot>
          <svg width="32" height="34" viewBox="0 0 32 34" fill="none"><path d="M5 24Q-1 10 10 4q8-4 14 1M27 8q6 14-5 20-7 3-13-1M9 29 24 6" stroke="#f0f0f0" strokeWidth="4" /><path d="M4 23Q-2 9 9 3q8-4 14 1M26 7q6 14-5 20-7 3-13-1M4 13v5q3 3 5-1v-4M12 19l4-8 3 8M21 18v-6l3 4 3-4v6" stroke="#8b8b8b" strokeWidth="2" /></svg>
        </Dock>
      </Bar>
      <BarEnd />
    </>
  );
}

/* ---------- signal list ---------- */
const Body = styled.div`
  height: 1223px;
  flex: none;
  display: flex;
  border-top: 10px solid #00007f;
`;
const Left = styled.div`
  width: 876px;
  flex: none;
  display: flex;
  flex-direction: column;
`;
const FilterRow = styled.div`
  height: 89px;
  flex: none;
  display: flex;
  align-items: flex-end;
  padding: 0 0 5px 2px;
`;
const Head = styled.div`
  height: 48px;
  flex: none;
  display: flex;
  width: 872px;
  border: solid #151515;
  border-width: 2px 2px 3px 4px;
  font-size: 30px;
`;
const HeadCell = styled.div<{ $w: number }>`
  width: ${(p) => p.$w}px;
  flex: none;
  display: flex;
  align-items: center;
  padding-left: 9px;
  box-shadow: inset 2px 2px 0 #f5f5f5, inset -2px -2px 0 #9a9a9a;
  border-right: 2px solid #151515;
`;
const List = styled.div`
  height: 1039px;
  flex: none;
  overflow: hidden;
  background: #fff;
  border-left: 3px solid #151515;
  width: 874px;
  padding-right: 4px;
  padding-top: 1px;
`;
const dotsV = css`
  background: repeating-linear-gradient(#777 0 2px, transparent 2px 4px);
`;
const TreeRow = styled.div`
  height: 50px;
  display: flex;
  position: relative;
`;
const Stem = styled.div<{ $on: boolean; $h?: number }>`
  width: 2px;
  height: ${(p) => p.$h || 50}px;
  flex: none;
  ${(p) => p.$on && dotsV}
`;
const Twig = styled.div<{ $w: number }>`
  width: ${(p) => p.$w}px;
  height: 2px;
  flex: none;
  margin-top: 25px;
  background: repeating-linear-gradient(90deg, #777 0 2px, transparent 2px 4px);
`;
const Box = styled.div<{ $x: number }>`
  position: absolute;
  left: ${(p) => p.$x}px;
  top: 18px;
  width: 18px;
  height: 18px;
  border: 2px solid #b9b9b9;
  background: #fff;
  display: flex;
  align-items: center;
  justify-content: center;
`;
const Entry = styled.div<{ $sel: boolean }>`
  flex: 1;
  display: flex;
  justify-content: space-between;
  line-height: 47px;
  padding: 0 5px 0 4px;
  background: ${(p) => (p.$sel ? "#00007f" : "transparent")};
  color: ${(p) => (p.$sel ? "#e6e6f2" : "#151515")};
`;
const Name = styled.div`
  display: flex;
`;
const IconCell = styled.div`
  width: 30px;
  padding-top: 16px;
`;
const GroupLabel = styled.div`
  flex: 1;
  background: #d6d6d6;
  font-weight: 700;
  line-height: 46px;
  padding-left: 4px;
  color: #0c0c0c;
`;

type Sig = { n: string; w: number; v: string; vw: number; k: "in" | "out" | "wire"; x?: boolean; sel?: boolean; last?: boolean };
type Item = { g: string; w: number } | Sig;
const ITEMS: Item[] = [
  { g: "Group1", w: 99 },
  { n: "clk", w: 35, v: "St0", vw: 40, k: "in" },
  { n: "reset", w: 65, v: "St1", vw: 40, k: "in" },
  { n: "PC_in_1[31:0]", w: 178, v: "32'h3f3e_9d7e", vw: 188, k: "in", x: true },
  { n: "PC_in_2[31:0]", w: 178, v: "32'h6f03_57de", vw: 188, k: "in", x: true },
  { n: "inst_in_1[31:0]", w: 184, v: "32'h349e_f569", vw: 188, k: "in", x: true },
  { n: "inst_in_2[31:0]", w: 184, v: "32'h288b_9351", vw: 194, k: "in", x: true },
  { n: "issue_fire_1", w: 150, v: "St0", vw: 40, k: "wire", sel: true },
  { n: "issue_fire_2", w: 152, v: "St0", vw: 40, k: "wire", sel: true },
  { n: "issue_ROB_index_1[2:0]", w: 311, v: "3'h7", vw: 52, k: "out", x: true },
  { n: "issue_ROB_index_2[2:0]", w: 311, v: "3'h0", vw: 52, k: "out", x: true },
  { n: "bool_mispred", w: 168, v: "St0", vw: 40, k: "wire" },
  { n: "commit_mispred", w: 204, v: "St0", vw: 40, k: "wire" },
  { n: "br_pred_taken", w: 184, v: "St0", vw: 40, k: "wire", last: true },
  { g: "BR_unit", w: 112 },
  { n: "input_valid", w: 134, v: "St0", vw: 40, k: "in" },
  { n: "PC[31:0]", w: 108, v: "32'h6522_f9ca", vw: 188, k: "in", x: true },
  { n: "op1_value[31:0]", w: 200, v: "32'h12ae_8125", vw: 197, k: "in", x: true },
  { n: "op2_value[31:0]", w: 200, v: "32'h70a4_dde1", vw: 197, k: "in", x: true },
  { n: "jump_fire", w: 114, v: "St0", vw: 40, k: "in" },
  { n: "pred_branch", w: 159, v: "St1", vw: 40, k: "in" },
];

function SigIcon({ k, sel }: { k: string; sel?: boolean }) {
  return (
    <svg width="26" height="18" viewBox="0 0 26 18" fill="none">
      {k === "in" && <><path d="M13 9h11" stroke="#222" strokeWidth="2" /><path d="M2 2h7l6 7-6 7H2z" fill="#9fb5ab" stroke="#222" strokeWidth="2" /></>}
      {k === "out" && <><path d="M0 9h10" stroke="#222" strokeWidth="3" /><path d="M9 2h7l7 7-7 7H9z" fill="#9fb5ab" stroke="#222" strokeWidth="2" /></>}
      {k === "wire" && <path d="M0 13h7V5h8v8h9" stroke={sel ? "#2c6b2c" : "#4e9c3f"} strokeWidth="2" />}
    </svg>
  );
}
const Sign = ({ plus }: { plus?: boolean }) => (
  <svg width="12" height="12" viewBox="0 0 12 12"><path d={plus ? "M1 6h10M6 1v10" : "M1 6h10"} stroke="#111" strokeWidth="2.200" /></svg>
);

function SignalList() {
  return (
    <List>
      {ITEMS.map((it, i) =>
        "g" in it ? (
          <TreeRow key={i}>
            <Slot $w={20} />
            <Stem $on />
            <Twig $w={19} />
            <GroupLabel><Fit w={it.w}>{it.g}</Fit></GroupLabel>
            <Box $x={13}><Sign /></Box>
          </TreeRow>
        ) : (
          <TreeRow key={i}>
            <Slot $w={20} />
            <Stem $on />
            <Slot $w={38} />
            <Stem $on $h={it.last ? 26 : 50} />
            <Twig $w={19} />
            <Entry $sel={!!it.sel}>
              <Name>
                <IconCell><SigIcon k={it.k} sel={it.sel} /></IconCell>
                <Fit w={it.w}>{it.n}</Fit>
              </Name>
              <Fit w={it.vw}>{it.v}</Fit>
            </Entry>
            {it.x && <Box $x={53}><Sign plus /></Box>}
          </TreeRow>
        )
      )}
    </List>
  );
}

const HScroll = styled.div`
  flex: 1;
  min-height: 0;
  display: flex;
  padding-top: 2px;
  border-top: 3px solid #f2f2f2;
`;
const Track = styled.div<{ $w: number }>`
  ${dither}
  width: ${(p) => p.$w}px;
  display: flex;
  justify-content: space-between;
  flex: none;
`;
const SBtn = styled.div<{ $h?: number }>`
  ${raised}
  width: 32px;
  height: ${(p) => (p.$h ? p.$h + "px" : "100%")};
  display: flex;
  align-items: center;
  justify-content: center;
  flex: none;
`;
const Arrow = ({ d, c = "#000" }: { d: "l" | "r" | "u" | "d"; c?: string }) => (
  <svg width="16" height="16" viewBox="0 0 16 16">
    <path d={{ l: "M11 1v14L4 8z", r: "M5 1v14l7-7z", u: "M1 11h14L8 4z", d: "M1 5h14l-7 7z" }[d]} fill={c} />
  </svg>
);

/* ---------- wave pane ---------- */
const Splitter = styled.div`
  width: 15px;
  flex: none;
  background: linear-gradient(90deg, #888 0 1px, #e4e4e4 1px 9px, #9a9a9a 9px 11px, #1a1a1a 11px);
`;
const Right = styled.div`
  flex: 1;
  min-width: 0;
  display: flex;
  flex-direction: column;
`;
const Cursors = styled.div`
  height: 83px;
  flex: none;
  background: #000;
  border-top: 4px solid #8b8b8b;
  border-right: 4px solid #c6c6c6;
`;
const Gap = styled.div`
  height: 7px;
  flex: none;
  background: linear-gradient(#f5f5f5 0 3px, #c6c6c6 3px 5px, #262626 5px);
`;
const WaveRow = styled.div`
  display: flex;
  height: 1085px;
  flex: none;
`;
const WaveCol = styled.div`
  width: 2097px;
  flex: none;
  display: flex;
  flex-direction: column;
`;
const VTrack = styled.div`
  ${dither}
  width: 32px;
  display: flex;
  flex-direction: column;
  flex: none;
`;
const Thumb = styled.div<{ $w: number; $h: number }>`
  ${raised}
  width: ${(p) => p.$w}px;
  height: ${(p) => p.$h}px;
`;
const WScroll = styled.div`
  ${dither}
  height: 33px;
  flex: none;
  display: flex;
`;
const SyncCell = styled.div`
  flex: 1;
  background: #c6c6c6;
  padding: 5px 0 0 6px;
`;

const YEL = "#ffff55";
const CY = "#4fb8bc";

const seg = (base: number, s: string): [number, number][] =>
  s.split(" ").map((p) => {
    const [a, b] = p.split("-").map(Number);
    return [base + a / 3, base + b / 3];
  });
const BUS = [
  ...seg(1400, "136-159 175-190 218-228 248-258 302-322 343-358 377-388 408-425 470-490 512-527 545-557 577-587 631-659 672-693 712-725 743-755 798-826 840-857 877-888 907-923 967-988 1010-1025 1043-1056 1075-1085 1130-1156 1172-1192 1212-1224 1242-1253 1297-1324 1340-1361"),
  ...seg(1850, "25-40 55-72 115-138 157-173 192-204 222-238 277-305 323-340 358-373 390-402 445-473 487-508 527-540 555-570 613-635 655-672 690-702 720-737 779-804 820-838 857-872 888-900 943-971 988-1008 1025-1040 1055-1066 1110-1135 1155-1170 1187-1200 1217-1235 1277-1303 1320-1338 1357-1371 1390-1400 1435-1450"),
];
const F1 = [
  ...seg(1400, "139-156 175-190 247-258 302-323 343-358 415-419 469-492 511-527 583-587 631-658 672-695 744-756 799-822 840-857 913-924 967-990 1010-1025 1080-1085 1130-1157 1171-1193 1243-1254 1297-1320 1338-1355"),
  ...seg(1850, "61-72 115-138 157-174 229-233 277-306 325-341 391-402 445-468 487-504 559-569 613-636 655-672 726-731 775-804 823-839 894-899 943-966 985-1002 1058-1068 1111-1134 1153-1170 1225-1229 1273-1302 1321-1338 1393-1397 1441-1452"),
];
const spikes = (base: number, v: number[]) => v.map((n) => [base + Math.abs(n) / 3, n < 0] as [number, boolean]);
const F2 = [
  ...spikes(1400, [165, 201, 243, 267, -330, 369, 381, 405, -432, 495, 537, 549, 573, 597, 663, 699, 717, 741, 765, 831, 867, 879, 909, -930, 993, 1035, 1047, 1071, -1098, 1161, 1197, 1215, 1239, 1263, 1329]),
  ...spikes(1850, [15, 27, 57, 81, 141, 183, 195, 219, -246, 309, 345, 363, 387, 411, 477, 513, 525, 555, 579, 639, 681, 693, 717, -744, 807, 843, 861, 885, 909, 975, 1011, 1023, 1053, 1077, -1140, 1179, 1191, 1215, -1242, 1305, 1341, 1359, 1383, 1407, 1467, 1485]),
];
const at = (b: number, k: number, v: number[]) => v.map((n) => b + n * k);
const BR = [
  ...at(880, 0.3954, [88, 194, 295, 397, 498, 599, 700, 801, 907, 1009, 1110, 1211, 1312, 1413]),
  ...at(1480, 0.3571, [36, 193, 344, 501, 658, 809, 966, 1122, 1274, 1431]),
  ...at(2000, 0.6531, [71, 157, 240, 326, 411, 494, 561, 626, 687, 748, 810, 871, 932, 993, 1058, 1119, 1180, 1241, 1303, 1364, 1425, 1489]),
];
const IV = [
  ...at(880, 0.3954, [93, 194, 295, 402, 503, 604, 705, 806, 907, 1009, 1110, 1216, 1317, 1449]),
  ...at(1480, 0.3571, [81, 238, 389, 546, 703, 854, 1011, 1167, 1319, 1475]),
  ...at(2000, 0.6531, [96, 182, 264, 350, 436, 516, 564, 626, 687, 751, 813, 874, 935, 996, 1058, 1119, 1183, 1244, 1306, 1367, 1428, 1499]),
];
const CROSS = BR.filter((x) => (x > 1435 && x < 2330) || x > 2965).map((x) => x + 2);

function BusRow({ y }: { y: number }) {
  return (
    <g>
      <rect x="891" y={y} width="2097" height="40" fill={YEL} />
      <path d={`M891 ${y + 0.5}H2988M891 ${y + 39.5}H2988`} stroke="#a8a83a" strokeWidth="1" />
      {BUS.map(([a, b], i) => {
        const wide = b - a > 8;
        const r = b - 1;
        return (
          <g key={i}>
            <rect x={a} y={y} width={b - a} height="40" fill="#000" />
            <path
              d={
                wide
                  ? `M${a - 1} ${y + 1}H${r - 2}V${y + 5}M${r} ${y + 5}V${y + 15}M${r} ${y + 25}V${y + 34}M${r - 2} ${y + 34}V${y + 39}H${a - 1}`
                  : `M${a} ${y + 1}H${r}V${y + 9}M${r} ${y + 29}V${y + 39}H${a}`
              }
              stroke="#62dfd8"
              strokeWidth="2"
              fill="none"
            />
            {wide && <path d={`M${r} ${y - 1}V${y + 5}M${r} ${y + 35}V${y + 41}`} stroke="#000" strokeWidth="2" />}
          </g>
        );
      })}
    </g>
  );
}

function Waves() {
  const base = [873, 1323, 1373, 1423, 1523, 1535, 1573, 1585, 1623, 1723];
  const knots = [...CROSS.map((x) => ({ x, c: true })), ...IV.map((x) => ({ x, c: false }))].sort((p, q) => p.x - q.x);
  let prev = 891;
  let rails = "";
  knots.forEach(({ x, c }) => {
    const end = x - (c ? 4 : 3);
    if (end > prev) rails += `M${prev} 1635H${end}M${prev} 1673H${end}`;
    prev = x + (c ? 4 : 1);
  });
  rails += `M${prev} 1635H2988M${prev} 1673H2988`;
  return (
    <svg width="2097" height="995" viewBox="891 729 2097 995" shapeRendering="crispEdges" fill="none">
      <rect x="891" y="729" width="2097" height="995" fill="#000" />
      <rect x="891" y="784" width="2097" height="40" fill={YEL} stroke="#a8a83a" strokeWidth="1" />
      {[884, 934, 984, 1034, 1184, 1234].map((y) => <BusRow key={y} y={y} />)}
      <rect x="891" y="1078" width="2097" height="100" fill="#00007f" />
      <rect x="891" y="1084" width="2097" height="40" fill={YEL} />
      {F1.map(([a, b], i) => (
        <g key={i}>
          <rect x={a} y="1083" width={b - a} height="40" fill={b - a < 3 ? "#55551a" : "#00007f"} />
          <path d={`M${a - 2} 1123H${b}`} stroke={CY} strokeWidth="2" />
        </g>
      ))}
      <path d="M891 1173H2988" stroke={CY} strokeWidth="2" />
      {F2.map(([x, thick], i) => <path key={i} d={`M${x} 1134V1173`} stroke={thick ? YEL : "#c3c33f"} strokeWidth={thick ? 4 : 2} />)}
      <path d="M2981 1134V1173" stroke="#c3c38f" strokeWidth="2" />
      <path d={base.map((y) => `M891 ${y}H2988`).join("")} stroke={CY} strokeWidth="2" />
      <path d={BR.map((x) => `M${x} 1384V1423`).join("")} stroke="#c9c93a" strokeWidth="2" />
      <path d={IV.map((x) => `M${x} 1484V1523`).join("")} stroke="#c9c93a" strokeWidth="2" />
      <path d={rails} stroke={CY} strokeWidth="2" />
      <g shapeRendering="geometricPrecision" stroke={CY} strokeWidth="2">
        {CROSS.map((x, i) => <path key={i} d={`M${x - 4} 1635l2 9 4 20 2 9M${x + 4} 1635l-2 9-4 20-2 9`} />)}
        {IV.map((x, i) => <path key={i} d={`M${x - 3} 1635l1 5 1 9M${x - 1} 1659l-1 9-1 5`} stroke="#62f0d8" />)}
      </g>
      <path d={IV.map((x) => `M${x} 1635V1674`).join("")} stroke="#c9c93a" strokeWidth="2" />
      <path d="M2977 1635V1673" stroke="#62f0f0" strokeWidth="3" />
      <g fontFamily="Liberation Sans, Arial, sans-serif" fontSize="30" fill="#d4d4d4">
        <text x="1870" y="1562" textLength="143">0000_20d8</text>
        <text x="1878" y="1612" textLength="128">0000_7ffe</text>
      </g>
    </svg>
  );
}

function Ruler({ y0, h, first, pitch, labels, kind }: { y0: number; h: number; first: number; pitch: number; labels: string[]; kind: "top" | "low" }) {
  const bottom = y0 + h;
  const ticks: React.ReactNode[] = [];
  const start = kind === "top" ? -5 : 1;
  for (let i = start; i < 210; i++) {
    const x = Math.round(first + (i * pitch) / 10);
    if (x > 2986) break;
    if (i % 10 === 0) ticks.push(<path key={i} d={`M${x} ${bottom - 34}V${bottom}`} />);
    else ticks.push(<path key={i} d={`M${x} ${bottom - (i % 5 === 0 ? 20 : 10)}V${bottom}`} />);
  }
  return (
    <svg width="2097" height={h} viewBox={`891 ${y0} 2097 ${h}`}>
      <rect x="891" y={y0} width="2097" height={h} fill="#a5a5a5" />
      {kind === "low" && <rect x="891" y={y0} width="34" height={h} fill="#636363" />}
      {kind === "low" && <rect x="2956" y={y0} width="32" height={h} fill="#686868" />}
      <g stroke="#222" strokeWidth="2" shapeRendering="crispEdges">{ticks}</g>
      {kind === "low" && <path d={`M925 ${y0}V${bottom}`} stroke="#d43fd4" strokeWidth="2" />}
      <g fontFamily="Liberation Sans, Arial, sans-serif" fontSize="30" fill="#222">
        {labels.map((t, i) => (
          <text key={t} x={first + i * pitch + (kind === "top" ? 3 : 3.5)} y={kind === "top" ? 714 : 1750} textLength={(t.length * 174.5) / 11}>{t}</text>
        ))}
      </g>
    </svg>
  );
}
const TOP = Array.from({ length: 9 }, (_, i) => `36${String(8 + i).padStart(2, "0")}0000000`);
const LOW = Array.from({ length: 10 }, (_, i) => (i === 0 ? "100" : `${i}0000000100`));

function WavePane() {
  return (
    <Right>
      <Cursors />
      <Gap />
      <WaveRow>
        <WaveCol>
          <Ruler kind="top" y0={684} h={45} first={1013.6} pitch={228.6} labels={TOP} />
          <Waves />
          <Ruler kind="low" y0={1724} h={45} first={925} pitch={220.1} labels={LOW} />
        </WaveCol>
        <VTrack>
          <SBtn $h={31}><Arrow d="u" /></SBtn>
          <Thumb $w={32} $h={248} />
          <Spacer />
          <SBtn $h={31}><Arrow d="d" /></SBtn>
        </VTrack>
      </WaveRow>
      <WScroll>
        <SBtn><Arrow d="l" /></SBtn>
        <Slot $w={786} />
        <Thumb $w={18} $h={33} />
        <Slot $w={1229} />
        <SBtn><Arrow d="r" /></SBtn>
        <SyncCell>
          <svg width="24" height="24" viewBox="0 0 24 24" fill="none" stroke="#222" strokeWidth="2"><path d="M9 3Q1 7 4 15l4 4V5M15 21q8-4 5-12l-4-4v14M11 9q4 3 2 7" /></svg>
        </SyncCell>
      </WScroll>
    </Right>
  );
}

/* ---------- bottom of the window ---------- */
const TabArea = styled.div`
  height: 56px;
  flex: none;
  border-top: 2px solid #8f8f8f;
  border-bottom: 3px solid #f4f4f4;
`;
const WinTab = styled.div`
  width: 187px;
  height: 50px;
  margin-left: 1px;
  display: flex;
  align-items: center;
  padding: 0 0 1px 11px;
  border: solid;
  border-width: 0 3px 3px 3px;
  border-color: #222 #222 #222 #f4f4f4;
`;
const Status = styled.div`
  flex: 1;
  display: flex;
  align-items: center;
  justify-content: flex-end;
  padding-right: 10px;
`;
const Panel = styled.div<{ $w: number; $end?: boolean }>`
  width: ${(p) => p.$w}px;
  height: 44px;
  margin-left: 5px;
  flex: none;
  display: flex;
  align-items: center;
  justify-content: ${(p) => (p.$end ? "flex-end" : "flex-start")};
  padding: 0 5px 0 0;
  border: 2px solid;
  border-color: #949494 #f3f3f3 #f3f3f3 #949494;
`;
const StatBtn = styled.div`
  ${raised}
  width: 36px;
  height: 38px;
  display: flex;
  align-items: center;
  justify-content: center;
  flex: none;
`;
const BottomPanel = styled.div`
  height: 50px;
  flex: none;
  display: flex;
  align-items: center;
  background: #d8dad6;
  border-top: 2px solid #b5b8b3;
  padding: 0 0 0 3px;
  font: 400 27px ${MATE};
  color: #484c50;
`;
const Task = styled.div<{ $w: number; $on?: boolean }>`
  width: ${(p) => p.$w}px;
  height: 100%;
  flex: none;
  display: flex;
  align-items: center;
  padding: 0 0 5px 7px;
  background: ${(p) => (p.$on ? "linear-gradient(#c4c6c3, #cfd1ce 60%, #d2d4d1)" : "none")};
`;
const Desks = styled.div`
  width: 358px;
  height: 100%;
  display: flex;
  flex: none;
  background: #8e908d;
`;
const DeskOn = styled.div`
  width: 88px;
  height: 100%;
  display: flex;
  align-items: center;
  justify-content: center;
  background: linear-gradient(#4a6da0 0 3px, #8fa9cb 4px, #7288a6 55%, #66727f);
  border-right: 3px solid #c9cbc8;
`;
const Blob = () => (
  <svg width="34" height="34" viewBox="0 0 34 34"><path d="M14 2q5-3 7 1 1 4-1 6 6 2 6 9 7-2 7 5 0 3-2 5 0 5-5 5-3 1-5-3-4 4-10 3Q2 32 1 20 1 12 11 9q0-5 3-7z" fill="#fff" /></svg>
);
const MiniWin = ({ s = 28 }: { s?: number }) => (
  <svg width={s} height={s * 0.8} viewBox="0 0 28 22"><rect width="28" height="22" rx="1" fill="#e9e9e4" stroke="#777" /><rect width="28" height="6" fill="#31589a" /></svg>
);
const DeskCell = styled.div<{ $w: number; $pl: number; $pt?: number }>`
  width: ${(p) => p.$w}px;
  height: 46px;
  flex: none;
  padding-left: ${(p) => p.$pl}px;
  padding-top: ${(p) => p.$pt || 0}px;
  display: flex;
  align-items: center;
  gap: 5px;
  position: relative;
  border-right: 2px solid #c9cbc8;
`;
const Outline = styled.div<{ $x: number; $y: number; $w: number; $h: number }>`
  position: absolute;
  left: ${(p) => p.$x}px;
  top: ${(p) => p.$y}px;
  width: ${(p) => p.$w}px;
  height: ${(p) => p.$h}px;
  border: 2px solid #9db8dc;
`;
const FolderTop = () => (
  <svg width="42" height="38" viewBox="0 0 42 38"><path d="M3 4q0-3 3-3h10l3 5h18q3 0 3 3v25q0 3-3 3H5q-3 0-3-3z" fill="#a3a68f" stroke="#6f7260" strokeWidth="2" /><rect x="3" y="12" width="36" height="24" rx="3" fill="#c3c6ae" stroke="#7b7e6b" strokeWidth="1.500" /><path d="M12 20v-3h4M26 17h4v3M12 28v3h4M26 31h4v-3M18 20h3q3 0 3 4t-3 4h-3z" fill="none" stroke="#fff" strokeWidth="2.200" /></svg>
);

export default function App() {
  return (
    <Screen>
      <Global />
      <MacMenu />
      <Desk>
        <Browser>
          <Chrome />
          <TopPanel>
            <Slot $w={53}><MateLogo /></Slot>
            <Slot $w={177}><Fit w={160}>Applications</Fit></Slot>
            <Slot $w={100}><Fit w={83}>Places</Fit></Slot>
            <Slot $w={113}><Fit w={98}>System</Fit></Slot>
            <Slot $w={48}><Drawer /></Slot>
            <Slot $w={50}><Term s={44} /></Slot>
            <Fox />
            <Spacer />
            <Slot $w={15}><Dots /></Slot>
            <Slot $w={57}><NetIcon /></Slot>
            <Slot $w={242}><Fit w={234}>Sun Dec 15, 20:02</Fit></Slot>
          </TopPanel>
          <TitleBar>
            <Knob $d={24} />
            <TitleText><Fit w={1203}>DVE - TopLevel.2 - [Wave.1]  /home/tmp/.../project/bmark_output/cachetest.vpd</Fit></TitleText>
            <Knobs>
              {["m4 6 5 5 5-5", "m4 11 5-5 5 5", "m4 4 10 10M14 4 4 14"].map((d) => (
                <Knob key={d} $d={34}><svg width="18" height="18" viewBox="0 0 18 18"><path d={d} fill="none" stroke="#555" strokeWidth="3" /></svg></Knob>
              ))}
            </Knobs>
          </TitleBar>
          <Dve>
            <QtMenu>
              <Slot $w={38}><WaveI s={25} /></Slot>
              <Slot $w={67}><Fit w={43}><u>F</u>ile</Fit></Slot>
              <Slot $w={67}><Fit w={48}><u>E</u>dit</Fit></Slot>
              <Slot $w={83}><Fit w={59}><u>V</u>iew</Fit></Slot>
              <Slot $w={136}><Fit w={116}>Si<u>m</u>ulator</Fit></Slot>
              <Slot $w={98}><Fit w={77}>Si<u>g</u>nal</Fit></Slot>
              <Slot $w={99}><Fit w={79}><u>S</u>cope</Fit></Slot>
              <Slot $w={94}><Fit w={73}><u>T</u>race</Fit></Slot>
              <Slot $w={120}><Fit w={99}><u>W</u>indow</Fit></Slot>
              <Slot $w={90}><Fit w={57}><u>H</u>elp</Fit></Slot>
              <Spacer />
              <MdiBtn><svg width="20" height="18" viewBox="0 0 20 18"><path d="M3 14h12" stroke="#000" strokeWidth="4" /></svg></MdiBtn>
              <MdiBtn><svg width="20" height="18" viewBox="0 0 20 18" fill="none" stroke="#000" strokeWidth="2"><path d="M7 6V2h10v8h-4" /><path d="M7 2h10" strokeWidth="4" /><rect x="3" y="8" width="10" height="9" /><path d="M3 8h10" strokeWidth="3" /></svg></MdiBtn>
              <MdiBtn $ml={3}><svg width="20" height="18" viewBox="0 0 20 18"><path d="m3 2 14 14M17 2 3 16" stroke="#000" strokeWidth="3.200" /></svg></MdiBtn>
            </QtMenu>
            <Toolbars />
            <Body>
              <Left>
                <FilterRow>
                  <Combo $w={700}><span>*</span><DropBtn><Tri /></DropBtn></Combo>
                  <Combo $w={81} $ml={4} $pl={4}>
                    <svg width="36" height="26" viewBox="0 0 36 26" fill="none" stroke="#2f8a2f" strokeWidth="2"><path d="M18 0v26" stroke="#222" /><path d="M0 6h13M9 2l4 4-4 4M0 20h13M9 16l4 4-4 4M22 6h13M31 2l4 4-4 4M22 20h13M31 16l4 4-4 4" /></svg>
                    <DropBtn><Tri /></DropBtn>
                  </Combo>
                  <Combo $w={81} $ml={5} $pl={4}>
                    <svg width="34" height="34" viewBox="0 0 34 34" fill="none"><rect x="2" y="4" width="30" height="22" stroke="#111" strokeWidth="2.500" strokeDasharray="5 3" /><path d="M5 8h16M5 14h16M9 6v10M15 6v10" stroke="#40e840" strokeWidth="2.500" /><path d="M5 21h16" stroke="#f0e860" strokeWidth="5" /><rect x="23" y="7" width="7" height="8" stroke="#e02020" strokeWidth="2.500" /><rect x="23" y="18" width="7" height="6" stroke="#20c020" strokeWidth="2.500" /><path d="M3 32h9v-4h8v4h10" stroke="#1a1ae0" strokeWidth="2.500" /></svg>
                    <DropBtn><Tri /></DropBtn>
                  </Combo>
                </FilterRow>
                <Head>
                  <HeadCell $w={481}><Fit w={74}>Name</Fit></HeadCell>
                  <HeadCell $w={385}><Fit w={71}>Value</Fit></HeadCell>
                </Head>
                <SignalList />
                <HScroll>
                  <Track $w={482}><SBtn><Arrow d="l" c="#a0a0a0" /></SBtn><SBtn><Arrow d="r" c="#a0a0a0" /></SBtn></Track>
                  <Track $w={384}><SBtn><Arrow d="l" c="#a0a0a0" /></SBtn><SBtn><Arrow d="r" c="#a0a0a0" /></SBtn></Track>
                </HScroll>
              </Left>
              <Splitter />
              <WavePane />
            </Body>
            <TabArea>
              <WinTab>
                <Slot $w={39}><WaveI s={29} /></Slot>
                <Slot $w={102}><Fit w={91}>Wave.1</Fit></Slot>
                <svg width="16" height="16" viewBox="0 0 16 16"><path d="m1 1 14 14M15 1 1 15" stroke="#777" strokeWidth="3" /></svg>
              </WinTab>
            </TabArea>
            <Status>
              <StatBtn><svg width="32" height="32" viewBox="0 0 32 32"><path d="M10 2h12l8 8v10l-8 7-10 1-3 4v-5l-7-7V10z" fill="#fff" stroke="#222" strokeWidth="1.500" /><path d="M11 5h10l6 6v8l-6 6H11l-6-6v-8z" fill="#c32020" /><path d="M16 7v10M16 20v4" stroke="#fff" strokeWidth="4" /></svg></StatBtn>
              <Panel $w={495}><Fit w={488}>TestHarness.dut.cpu.issue_logic_2_inst</Fit></Panel>
              <Panel $w={155} $end><Fit w={46}>N/A</Fit></Panel>
              <Panel $w={78} $end><Fit w={46}>N/A</Fit></Panel>
              <Slot $w={5} />
              <StatBtn><SrcI /></StatBtn>
              <StatBtn><GateI /></StatBtn>
              <StatBtn><PathI /></StatBtn>
              <StatBtn><WaveI /></StatBtn>
              <StatBtn><ListI /></StatBtn>
              <StatBtn><MemI /></StatBtn>
            </Status>
          </Dve>
          <BottomPanel>
            <Slot $w={54}><FolderTop /></Slot>
            <Slot $w={10}><Dots /></Slot>
            <Task $w={403}>
              <Slot $w={50}><Term s={34} /></Slot>
              <Fit w={185}>Mate Terminal</Fit>
            </Task>
            <Task $w={402}>
              <Slot $w={49}><Blob /></Slot>
              <Fit w={338}>DVE - TopLevel.1 - [Sour...</Fit>
            </Task>
            <Task $w={404} $on>
              <Slot $w={49}><Blob /></Slot>
              <Fit w={336}>DVE - TopLevel.2 - [Wav...</Fit>
            </Task>
            <Spacer />
            <Desks>
              <DeskOn><Blob /></DeskOn>
              <DeskCell $w={82} $pl={18}>
                <Outline $x={8} $y={3} $w={50} $h={42} /><Outline $x={18} $y={10} $w={40} $h={28} />
                <MiniWin />
              </DeskCell>
              <DeskCell $w={92} $pl={17}>
                <Outline $x={9} $y={3} $w={80} $h={42} /><Outline $x={35} $y={3} $w={20} $h={38} />
                <MiniWin /><Term s={30} />
              </DeskCell>
              <DeskCell $w={94} $pl={46} $pt={4}>
                <Outline $x={22} $y={10} $w={36} $h={26} /><Outline $x={32} $y={4} $w={56} $h={41} />
                <MiniWin />
              </DeskCell>
            </Desks>
          </BottomPanel>
        </Browser>
      </Desk>
    </Screen>
  );
}
